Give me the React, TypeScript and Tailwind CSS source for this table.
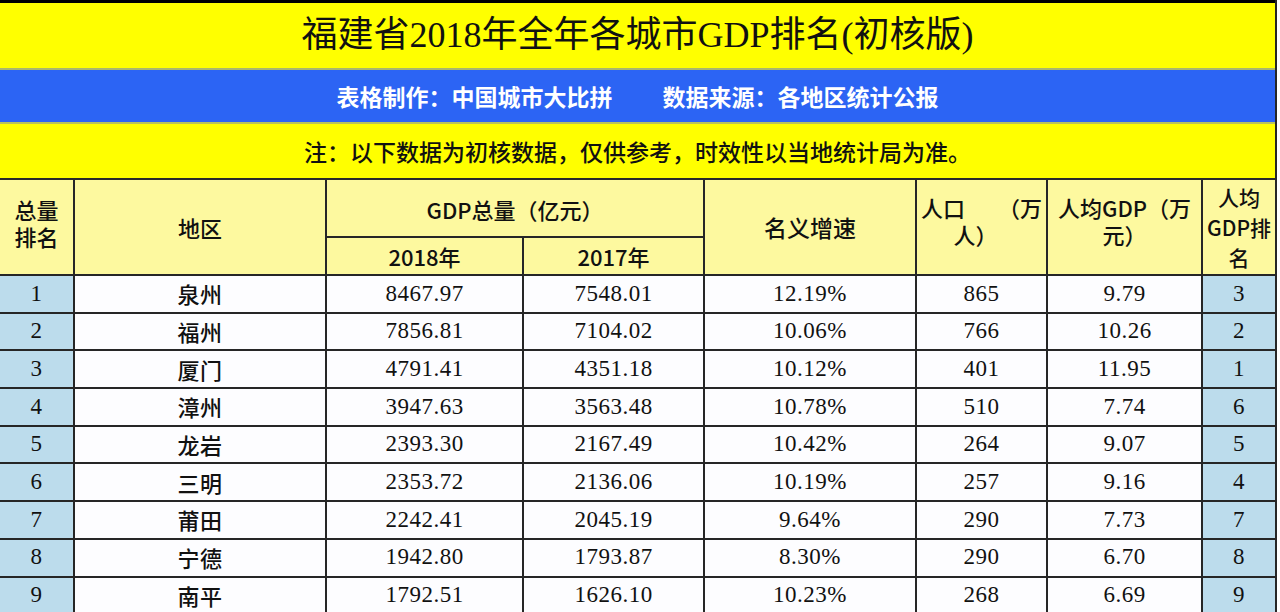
const rows = [
  { rank: 1, city: '泉州', gdp18: '8467.97', gdp17: '7548.01', growth: '12.19%', pop: '865', per: '9.79', perRank: 3 },
  { rank: 2, city: '福州', gdp18: '7856.81', gdp17: '7104.02', growth: '10.06%', pop: '766', per: '10.26', perRank: 2 },
  { rank: 3, city: '厦门', gdp18: '4791.41', gdp17: '4351.18', growth: '10.12%', pop: '401', per: '11.95', perRank: 1 },
  { rank: 4, city: '漳州', gdp18: '3947.63', gdp17: '3563.48', growth: '10.78%', pop: '510', per: '7.74', perRank: 6 },
  { rank: 5, city: '龙岩', gdp18: '2393.30', gdp17: '2167.49', growth: '10.42%', pop: '264', per: '9.07', perRank: 5 },
  { rank: 6, city: '三明', gdp18: '2353.72', gdp17: '2136.06', growth: '10.19%', pop: '257', per: '9.16', perRank: 4 },
  { rank: 7, city: '莆田', gdp18: '2242.41', gdp17: '2045.19', growth: '9.64%', pop: '290', per: '7.73', perRank: 7 },
  { rank: 8, city: '宁德', gdp18: '1942.80', gdp17: '1793.87', growth: '8.30%', pop: '290', per: '6.70', perRank: 8 },
  { rank: 9, city: '南平', gdp18: '1792.51', gdp17: '1626.10', growth: '10.23%', pop: '268', per: '6.69', perRank: 9 },
];

const cols = 'grid-cols-[75px_252px_197px_181px_212px_131px_155px_74px]';
const cell = 'flex items-center justify-center border-r-2 border-b-2 border-[#262626]';

const App = () => {
  return (
    <div className="w-[1280px] h-[612px] overflow-hidden bg-white font-['Liberation_Serif','Noto_Sans_CJK_SC',serif] text-[#111]">
      <div className="w-[1277px] border-r-2 border-[#262626]">
        <div className="h-[3px] bg-black" />
        <div className="h-[65px] bg-[#ffff00] flex items-center justify-center text-[36px] leading-none pb-[2px]">
          福建省2018年全年各城市GDP排名(初核版)
        </div>
        <div className="h-[2px] bg-[#a9b66e]" />
        <div className="h-[52px] bg-[#2c64f4] flex items-center justify-center gap-[50px] text-white font-bold text-[23px] font-['Noto_Sans_CJK_SC',sans-serif]">
          <span>表格制作：中国城市大比拼</span>
          <span>数据来源：各地区统计公报</span>
        </div>
        <div className="h-[2px] bg-[#b9c35a]" />
        <div className="h-[54px] bg-[#ffff00] flex items-center justify-center text-[23px] font-medium font-['Noto_Sans_CJK_SC',sans-serif]">
          注：以下数据为初核数据，仅供参考，时效性以当地统计局为准。
        </div>
        <div className="h-[2px] bg-[#2a2a2a]" />

        <div className={`grid ${cols} grid-rows-[58px_38px] bg-[#fdf99f] text-[22px] leading-[27px] font-medium font-['Noto_Sans_CJK_SC',sans-serif]`}>
          <div className={`${cell} row-span-2 flex-col pb-[8px]`}>
            <span>总量</span>
            <span>排名</span>
          </div>
          <div className={`${cell} row-span-2`}>地区</div>
          <div className={`${cell} col-span-2 pt-[2px]`}>GDP总量（亿元）</div>
          <div className={`${cell} row-span-2 text-[23px]`}>名义增速</div>
          <div className={`${cell} row-span-2 flex-col px-[4px] pb-[12px]`}>
            <span className="w-full flex justify-between">
              <span>人口</span>
              <span>（万</span>
            </span>
            <span className="pr-[12px]">人）</span>
          </div>
          <div className={`${cell} row-span-2 flex-col pb-[12px]`}>
            <span>人均GDP（万</span>
            <span>元）</span>
          </div>
          <div className={`${cell} row-span-2 flex-col leading-[30px] text-[21px]`}>
            <span>人均</span>
            <span>GDP排</span>
            <span>名</span>
          </div>
          <div className={cell}>2018年</div>
          <div className={cell}>2017年</div>
        </div>

        <div className={`grid ${cols} auto-rows-[37.7px] text-[23px] tracking-[0.5px]`}>
          {rows.map((r) => (
            <div key={r.rank} className="contents">
              <div className={`${cell} bg-[#bcdcec]`}>{r.rank}</div>
              <div className={`${cell} bg-[#fdfdff] font-medium font-['Noto_Sans_CJK_SC',sans-serif] text-[22px]`}>{r.city}</div>
              <div className={`${cell} bg-[#fdfdff]`}>{r.gdp18}</div>
              <div className={`${cell} bg-[#fdfdff]`}>{r.gdp17}</div>
              <div className={`${cell} bg-[#fdfdff]`}>{r.growth}</div>
              <div className={`${cell} bg-[#fdfdff]`}>{r.pop}</div>
              <div className={`${cell} bg-[#fdfdff]`}>{r.per}</div>
              <div className={`${cell} bg-[#bcdcec]`}>{r.perRank}</div>
            </div>
          ))}
        </div>
      </div>
    </div>
  );
};

export default App;
